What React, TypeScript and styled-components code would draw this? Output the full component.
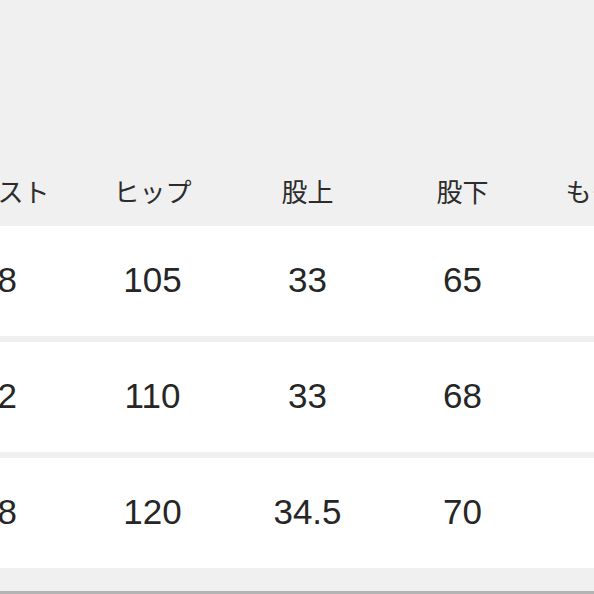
import { createGlobalStyle } from "styled-components";
import styled from "styled-components";

const GlobalStyle = createGlobalStyle`
  html, body {
    margin: 0;
    padding: 0;
    background: #f0f0f0;
  }
`;

const Page = styled.div`
  width: 594px;
  height: 594px;
  overflow: hidden;
  background: #f0f0f0;
  display: flex;
  flex-direction: column;
  box-sizing: border-box;
  border-bottom: 3px solid #b4b4b4;
`;

const Table = styled.div`
  margin-left: -80px;
  width: 775px;
  display: flex;
  flex-direction: column;
  gap: 6px;
  padding-top: 156px;
`;

const Row = styled.div<{ $head?: boolean }>`
  display: grid;
  grid-template-columns: repeat(5, 155px);
  align-items: center;
  height: ${(p) => (p.$head ? "70px" : "110px")};
  background: ${(p) => (p.$head ? "transparent" : "#ffffff")};
  margin-bottom: ${(p) => (p.$head ? "-6px" : "0")};
`;

const HeadCell = styled.div`
  text-align: center;
  font-family: "Noto Sans CJK JP", sans-serif;
  font-weight: 400;
  font-size: 26px;
  color: #2c2c2c;
  white-space: nowrap;
  padding-bottom: 2px;
`;

const Cell = styled.div`
  text-align: center;
  font-family: "Liberation Sans", Arial, sans-serif;
  font-size: 35px;
  color: #262626;
  white-space: nowrap;
  padding-bottom: 2px;
`;

const heads = ["ウエスト", "ヒップ", "股上", "股下", "もも周り"];
const rows = [
  ["78", "105", "33", "65", "32"],
  ["82", "110", "33", "68", "34"],
  ["88", "120", "34.5", "70", "36"],
];

export default function App() {
  return (
    <>
      <GlobalStyle />
      <Page>
        <Table>
          <Row $head>
            {heads.map((h) => (
              <HeadCell key={h}>{h}</HeadCell>
            ))}
          </Row>
          {rows.map((r, i) => (
            <Row key={i}>
              {r.map((v, j) => (
                <Cell key={j}>{v}</Cell>
              ))}
            </Row>
          ))}
        </Table>
      </Page>
    </>
  );
}
